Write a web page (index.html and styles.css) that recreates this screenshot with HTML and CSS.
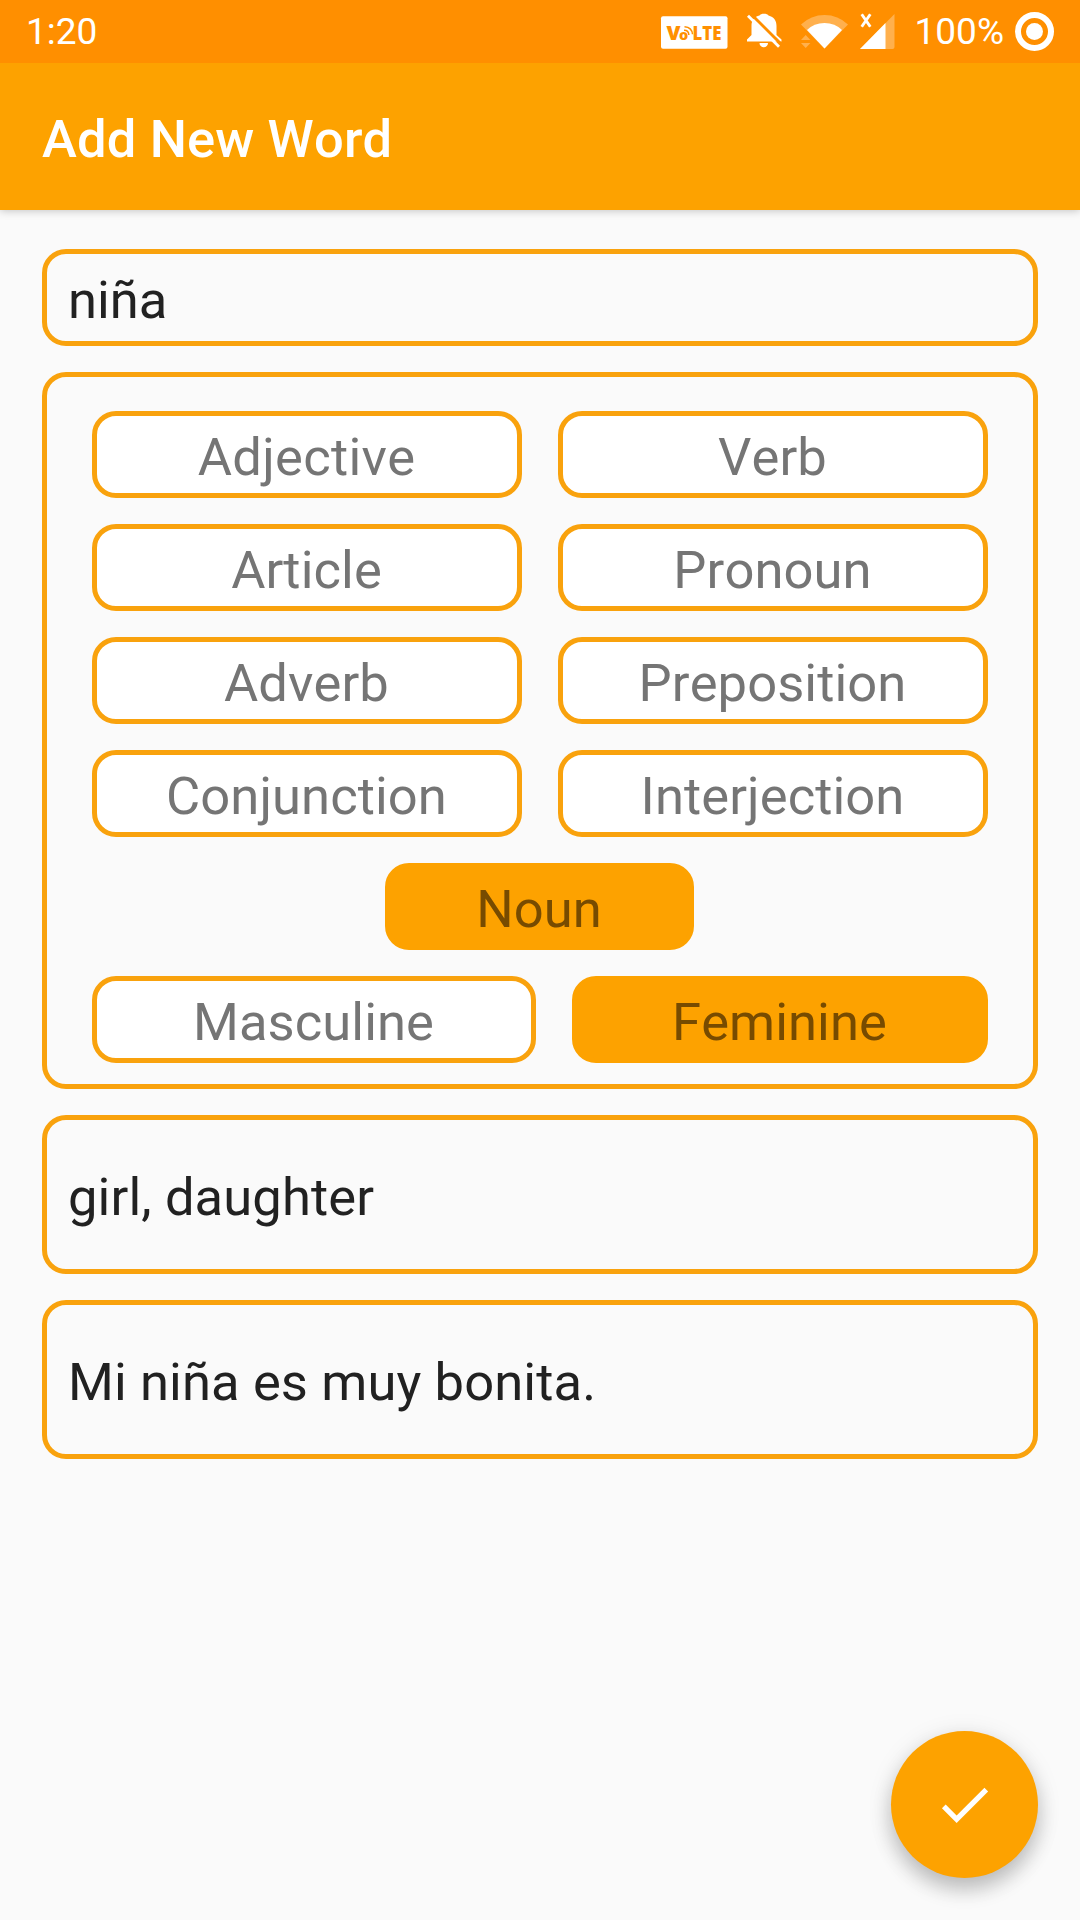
FILE: index.html
```html
<!DOCTYPE html>
<html lang="en">
<head>
<meta charset="utf-8">
<title>Add New Word</title>
<link rel="stylesheet" href="styles.css">
</head>
<body>
<div class="screen">
  <div class="status">
    <span class="time">1:20</span>
    <svg class="icons" width="244" height="63" viewBox="655 0 244 63">
      <rect x="661" y="16.3" width="66.500" height="32.400" rx="2" fill="#fff"/>
      <g class="volte">
        <text x="666.500" y="39.700" textLength="14" lengthAdjust="spacingAndGlyphs" font-size="18.500">V</text>
        <text x="679" y="39.700" font-size="14.500">o</text>
        <text x="692.500" y="39.700" textLength="29" lengthAdjust="spacingAndGlyphs" font-size="18.500">LTE</text>
      </g>
      <path d="M684 30.200q4.500-.2 4.900 4.800M684.500 26.700q7.400.4 8 7.600" fill="none" stroke="#ff8f00" stroke-width="1.500"/>
      <path d="M747 41.500v-2l4.500-4.500v-9c0-6 3-9.500 8-10.500 1-2.300 8-2.300 9 0 5.500 1.500 8 5 8 10.500v9l5 4.500v2zM759.500 43h8.500a4.200 4.200 0 0 1-8.500 0z" fill="#fff"/>
      <path d="M750.500 13.500l31 31" stroke="#ff8f00" stroke-width="3"/>
      <path d="M748 15.800l31 31" stroke="#fff" stroke-width="2.800"/>
      <path d="M824.500 48.500L801 24.500Q811 15 824.500 15T848 24.500z" fill="#fff" opacity=".3"/>
      <path d="M824.500 48.500L807 30Q814 23 824.500 23T842 30z" fill="#fff"/>
      <path d="M801 40l4.700-5 4.700 5zM801 43h9.400l-4.700 5z" fill="#ff8f00"/>
      <path d="M801 40l4.700-5 4.700 5zM801 43h9.400l-4.700 5z" fill="#fff" opacity=".3"/>
      <path d="M860 49L894.500 14v33q0 2-2 2z" fill="#fff" opacity=".3"/>
      <path d="M860 49L885.500 23v26z" fill="#fff"/>
      <path d="M861.700 14.200l8.600 12.600M870.300 14.200l-8.600 12.600" stroke="#fff" stroke-width="2.900"/>
    </svg>
    <span class="percent">100%</span>
    <svg class="battery" width="39" height="39" viewBox="0 0 39 39">
      <circle cx="19.500" cy="19.500" r="16.500" fill="none" stroke="#fff" stroke-width="6"/>
      <circle cx="19.500" cy="19.500" r="8.500" fill="#fff"/>
    </svg>
  </div>
  <header class="appbar"><h1 class="title">Add New Word</h1></header>
  <main class="form">
    <div class="field">niña</div>
    <section class="types">
      <div class="grid">
        <div class="chip wide">Adjective</div><div class="chip">Verb</div>
        <div class="chip">Article</div><div class="chip">Pronoun</div>
        <div class="chip">Adverb</div><div class="chip">Preposition</div>
        <div class="chip">Conjunction</div><div class="chip">Interjection</div>
      </div>
      <div class="chip noun selected">Noun</div>
      <div class="genders">
        <div class="chip">Masculine</div><div class="chip selected">Feminine</div>
      </div>
    </section>
    <div class="field tall">girl, daughter</div>
    <div class="field tall">Mi niña es muy bonita.</div>
  </main>
  <div class="fab">
    <svg width="63" height="63" viewBox="0 0 24 24"><path d="M9 16.170L4.830 12l-1.420 1.410L9 19 21 7l-1.410-1.410z" fill="#fff"/></svg>
  </div>
</div>
</body>
</html>
```
FILE: styles.css
```css
* { box-sizing: border-box; }
body { margin: 0; }
.screen {
  position: relative;
  width: 1080px;
  height: 1920px;
  background: #fafafa;
  font-family: Roboto, sans-serif;
  font-size: 52.5px;
  font-kerning: none;
  overflow: hidden;
}
.status {
  position: relative;
  z-index: 1;
  display: flex;
  align-items: center;
  height: 63px;
  padding: 0 26px;
  background: #ff8f00;
  color: #fff;
  font-size: 37px;
}
.icons { display: block; margin-left: auto; }
.volte text {
  font-family: "Open Sans", sans-serif;
  font-weight: 800;
  fill: #ff8f00;
}
.percent { margin-left: 16px; }
.battery { display: block; margin-left: 11px; }
.appbar {
  display: flex;
  align-items: center;
  height: 147px;
  padding: 5px 42px 0;
  background: #fda200;
  color: #fff;
  box-shadow: 0 1px 8px rgba(0, 0, 0, .22);
}
.title { margin: 0; font-size: 52.5px; font-weight: 500; letter-spacing: .15px; }
.form {
  display: flex;
  flex-direction: column;
  gap: 26px;
  padding: 39px 42px 0;
}
.field {
  display: flex;
  align-items: center;
  height: 97px;
  padding: 5px 21px 0;
  border: 5px solid #f9a20d;
  border-radius: 24px;
  color: #212121;
}
.tall { height: 159px; letter-spacing: .12px; }
.types {
  display: flex;
  flex-direction: column;
  gap: 26px;
  padding: 34px 45px 21px;
  border: 5px solid #f9a20d;
  border-radius: 24px;
}
.grid {
  display: grid;
  grid-template-columns: 1fr 1fr;
  gap: 26px 36px;
}
.chip {
  display: flex;
  align-items: center;
  justify-content: center;
  height: 87px;
  padding: 5px 1px 0 0;
  border: 5px solid #f9a20d;
  border-radius: 24px;
  background: #fff;
  color: #757575;
  letter-spacing: .08px;
}
.wide { letter-spacing: .3px; }
.selected { background: #fda200; border-color: #fda200; color: #774b00; }
.noun { align-self: center; width: 309px; margin-right: 1px; }
.genders { display: grid; grid-template-columns: 444px 1fr; gap: 36px; }
.fab {
  position: absolute;
  right: 42px;
  bottom: 42px;
  display: flex;
  align-items: center;
  justify-content: center;
  width: 147px;
  height: 147px;
  border-radius: 50%;
  background: #fda200;
  box-shadow: 0 12px 20px rgba(0, 0, 0, .2), 0 4px 26px rgba(0, 0, 0, .1);
}
```
